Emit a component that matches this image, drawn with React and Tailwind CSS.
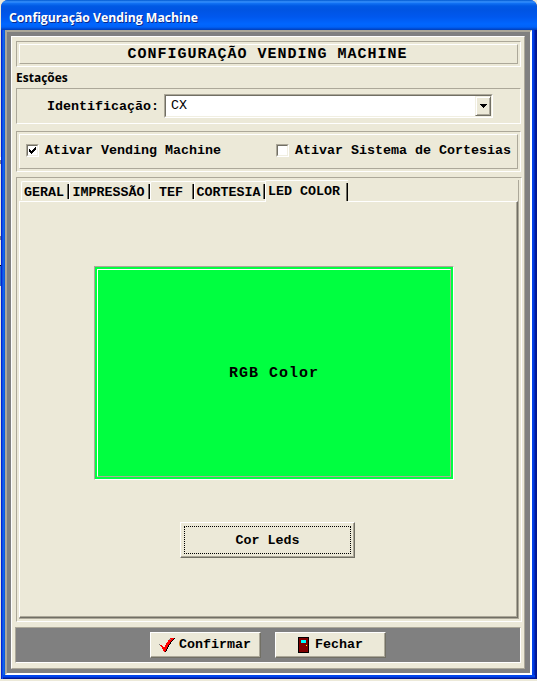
import React from "react";

const MONO = "font-['Liberation_Mono','Courier_New',monospace]";
const SANS = "font-['Open_Sans','Noto_Sans',sans-serif]";

// Grooved frame: a sunken outer line around a raised inner line.
function Groove({ className = "", children }) {
  return (
    <div className="border border-t-[#aca899] border-l-[#aca899] border-r-white border-b-white p-[2px]">
      <div
        className={`border border-t-white border-l-white border-r-[#aca899] border-b-[#aca899] ${className}`}
      >
        {children}
      </div>
    </div>
  );
}

function Checkbox({ checked }) {
  return (
    <span className="block size-[13px] shrink-0 border border-t-[#aca899] border-l-[#aca899] border-r-white border-b-white">
      <span className="block size-[11px] border border-t-[#716f64] border-l-[#716f64] border-r-[#f1efe2] border-b-[#f1efe2] bg-white">
        {checked && (
          <svg width="9" height="9" viewBox="0 0 9 9" shapeRendering="crispEdges" className="block">
            <path d="M1 3h1v3h-1zM2 4h1v3h-1zM3 5h1v3h-1zM4 4h1v3h-1zM5 3h1v3h-1zM6 2h1v3h-1zM7 1h1v3h-1z" />
          </svg>
        )}
      </span>
    </span>
  );
}

function Tab({ label, width, selected }) {
  return (
    <div
      className={`relative flex shrink-0 justify-center whitespace-nowrap rounded-tl-[2px] border-t border-l border-white ${width} ${
        selected ? "h-[22px] bg-[#ece9d8] pr-[6px] leading-[21px]" : "mb-px h-[19px] pr-[3px] leading-[21px]"
      }`}
    >
      {label}
      <span className="absolute top-[2px] right-0 bottom-px w-[2px] border-r border-l border-l-[#716f64] border-r-black" />
    </div>
  );
}

function PushButton({ children }) {
  return (
    <button className="flex h-[26px] w-[111px] items-center border border-t-white border-l-white border-r-[#716f64] border-b-[#716f64] bg-[#ece9d8] font-bold">
      <span className="flex h-[24px] w-full items-center border-r border-b border-[#aca899]">{children}</span>
    </button>
  );
}

export default function App() {
  return (
    <div className={`flex h-[681px] w-[537px] overflow-hidden bg-[#ece9d8] text-[13.33px] text-black ${MONO}`}>
      {/* Sliver of the window behind this dialog */}
      <div className="w-px shrink-0 bg-[linear-gradient(180deg,#ece9d8_157px,#ffffff_157px,#ffffff_160px,#808080_160px,#808080_164px,#ece9d8_164px,#ece9d8_236px,#808080_236px,#808080_240px,#ece9d8_240px,#ece9d8_265px,#000000_265px,#000000_266px,#2a6fd0_266px,#2a6fd0_286px,#ece9d8_286px)]" />
      <div className="flex h-[679px] w-[536px] shrink-0 flex-col overflow-hidden rounded-t-[7px] bg-[linear-gradient(90deg,#0019cf_0px,#0831d9_1px,#166aee_2px,#0855dd_4px,#0855dd_531px,#0046ee_531px,#0138df_533px,#001ca0_534px,#00138c_536px)]">
        <div className="flex h-[30px] shrink-0 items-center bg-[linear-gradient(180deg,#0058d0_0px,#3b94ff_2px,#1374f5_3px,#0059e4_6px,#0054e3_10px,#0058ee_17px,#0066ff_24px,#0062f8_27px,#0048ce_29px,#0040b8_30px)] pl-[8px]">
          <span
            className={`origin-left scale-x-[0.94] pt-[4px] text-[13px] leading-[18px] font-bold whitespace-nowrap text-white [text-shadow:1px_1px_0_#0a2a8c] ${SANS}`}
          >
            Configuração Vending Machine
          </span>
        </div>

        <div className="mr-[5px] ml-[4px] flex h-[645px] shrink-0 flex-col border-t-2 border-r-2 border-b-2 border-l-2 border-t-[#aca899] border-r-white border-b-white border-l-[#aca899] bg-[#808080] pt-[4px] pr-[5px] pb-[4px] pl-[4px]">
          <div className="flex h-[633px] flex-col border border-t-white border-l-white border-r-[#aca899] border-b-[#aca899] bg-[#ece9d8] pt-[4px] pr-[3px] pl-[3px]">
            <div className="ml-px">
              <Groove className="flex h-[20px] items-center justify-center pr-[2px] text-[15px] leading-[20px] font-bold tracking-[1px]">
                <span className="pt-[2px]">CONFIGURAÇÃO VENDING MACHINE</span>
              </Groove>
            </div>

            <div className="ml-px h-[21px] pt-[2px]">
              <span className={`inline-block origin-left text-[12px] leading-[16px] font-bold ${SANS}`}>
                Estações
              </span>
            </div>

            <div className="ml-px flex h-[36px] items-center border border-t-[#aca899] border-l-[#aca899] border-r-white border-b-white pl-[30px] font-bold">
              <span className="w-[117px] pt-[2px]">Identificação:</span>
              <div className="h-[24px] w-[329px] border border-t-[#aca899] border-l-[#aca899] border-r-white border-b-white">
                <div className="flex h-[22px] items-stretch justify-between border border-t-[#716f64] border-l-[#716f64] border-r-[#f1efe2] border-b-[#f1efe2] bg-white pl-[5px] font-normal">
                  <span className="leading-[19px]">CX</span>
                  <span className="flex w-[16px] items-center justify-center border border-t-[#f1efe2] border-l-[#f1efe2] border-r-[#716f64] border-b-[#716f64] bg-[#ece9d8] shadow-[inset_1px_1px_0_white,inset_-1px_-1px_0_#aca899]">
                    <svg width="7" height="4" viewBox="0 0 7 4" shapeRendering="crispEdges">
                      <path d="M0 0h7v1h-7zM1 1h5v1h-5zM2 2h3v1h-3zM3 3h1v1h-1z" />
                    </svg>
                  </span>
                </div>
              </div>
            </div>

            <div className="mt-[7px] ml-px">
              <Groove className="flex h-[35px] items-center pb-[2px] pl-[6px] font-bold">
                <Checkbox checked />
                <span className="ml-[6px] w-[231px] whitespace-nowrap">Ativar Vending Machine</span>
                <Checkbox />
                <span className="ml-[6px] whitespace-nowrap">Ativar Sistema de Cortesias</span>
              </Groove>
            </div>

            <div className="-mr-px mt-[5px] ml-px h-[445px] border border-t-[#aca899] border-l-[#aca899] border-r-white border-b-white pt-[2px] pr-[2px] pl-[2px]">
              <div className="flex h-[439px] flex-col border-r border-b border-[#aca899] font-bold">
                <div className="flex h-[21px] shrink-0 items-end pl-[2px]">
                  <Tab label="GERAL" width="w-[48px]" />
                  <Tab label="IMPRESSÃO" width="w-[81px]" />
                  <Tab label="TEF" width="w-[44px]" />
                  <Tab label="CORTESIA" width="w-[71px]" />
                  <div className="z-10 -mb-px">
                    <Tab label="LED COLOR" width="w-[83px]" selected />
                  </div>
                </div>
                <div className="grow border border-t-white border-l-white border-r-[#716f64] border-b-[#716f64]">
                  <div className="flex h-[415px] flex-col items-start border-r border-b border-[#aca899] pt-[64px] pl-[74px]">
                    <div className="h-[214px] w-[360px] border border-t-[#aca899] border-l-[#aca899] border-r-white border-b-white bg-[#00ff40] p-[2px]">
                      <div className="flex h-[208px] items-center justify-center border border-t-white border-l-white border-r-[#aca899] border-b-[#aca899] pt-[2px] text-[15px] tracking-[1px]">
                        RGB Color
                      </div>
                    </div>
                    <button className="mt-[42px] ml-[86px] h-[36px] w-[175px] border border-t-white border-l-white border-r-[#716f64] border-b-[#716f64]">
                      <span className="block h-[34px] border-r border-b border-[#aca899] p-[3px]">
                        <span className="block h-[28px] w-[167px] border border-dotted border-black leading-[27px]">
                          Cor Leds
                        </span>
                      </span>
                    </button>
                  </div>
                </div>
              </div>
            </div>

            <div className="mt-[5px] flex h-[36px] gap-[14px] border border-t-[#aca899] border-l-[#aca899] border-r-white border-b-white bg-[#808080] pt-[4px] pl-[134px]">
              <PushButton>
                <svg width="16" height="16" viewBox="0 0 16 16" shapeRendering="crispEdges" className="ml-[8px]">
                  <path
                    fill="#000"
                    d="M13 1h3v1h-1v1h-1v1h-1v1h-1v2h-1v1h-1v2h-1v2h-1v2h-1v1h-2v-1h-1v-2h-1v-2h-1v-1h1v1h1v1h1v1h1v-2h1v-2h1v-2h1v-1h1v-1h1v-1h2z"
                  />
                  <path
                    fill="#f00"
                    d="M14 1h1v1h-1v1h-1v1h-1v1h-1v2h-1v1h-1v2h-1v2h-1v2h-1v1h-1v-1h-1v-2h-1v-2h-1v-1h-1v-1h2v1h1v1h2v-2h1v-2h1v-1h1v-2h1v-1h1v-1h2z"
                  />
                  <path fill="#808080" d="M0 7h1v1h-1zM10 2h2v1h-2z" />
                </svg>
                <span className="ml-[4px]">Confirmar</span>
              </PushButton>
              <PushButton>
                <svg width="11" height="16" viewBox="0 0 11 16" shapeRendering="crispEdges" className="ml-[22px]">
                  <path fill="#000" d="M0 0h11v16h-11z" />
                  <path fill="#800000" d="M1 1h9v14h-9z" />
                  <path fill="#0ff" d="M3 3h5v3h-5z" />
                  <path fill="#ff0" d="M8 8h1v1h-1z" />
                </svg>
                <span className="ml-[6px]">Fechar</span>
              </PushButton>
            </div>
          </div>
        </div>
        <div className="mx-[2px] h-[4px] shrink-0 bg-[linear-gradient(180deg,#0046ee_0px,#0046ee_2px,#001ca0_3px,#00138c_4px)]" />
      </div>
    </div>
  );
}
